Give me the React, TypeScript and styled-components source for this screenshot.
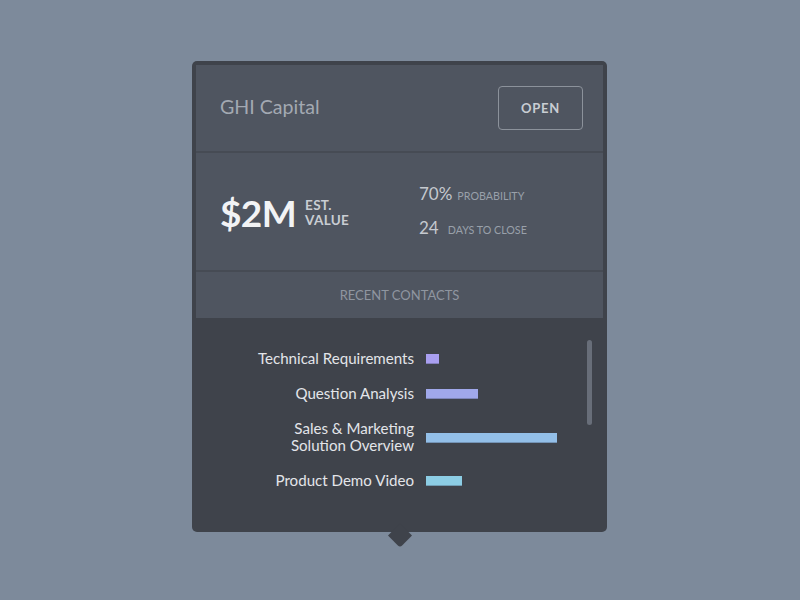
import React from "react";
import styled, { createGlobalStyle } from "styled-components";

const Global = createGlobalStyle`
  html, body {
    margin: 0;
    padding: 0;
    background: #7d8a9b;
    font-family: Lato, "Open Sans", sans-serif;
  }
`;

const Page = styled.div`
  width: 800px;
  height: 600px;
  display: flex;
  justify-content: flex-start;
  align-items: flex-start;
  padding: 61px 0 0 192px;
  box-sizing: border-box;
`;

const Card = styled.div`
  position: relative;
  width: 415px;
  background: #3f434b;
  border-radius: 5px;
  padding: 4px 4px 0;
  box-sizing: border-box;
`;

const Pointer = styled.div`
  position: absolute;
  left: 50%;
  bottom: -12px;
  width: 17px;
  height: 17px;
  background: #3f434b;
  transform: translateX(-50%) rotate(45deg);
  border-bottom-right-radius: 3px;
`;

const Panel = styled.div`
  background: #4f5560;
  display: flex;
  flex-direction: column;
`;

const Header = styled.div`
  height: 86px;
  display: flex;
  align-items: center;
  justify-content: space-between;
  padding: 0 20px 0 24px;
  border-bottom: 2px solid #464b54;
`;

const Title = styled.div`
  font-size: 19.6px;
  color: #a3a9b2;
  margin-bottom: 4px;
`;

const OpenButton = styled.button`
  width: 85px;
  height: 44px;
  margin-bottom: 1px;
  border: 1px solid #8c929b;
  border-radius: 4px;
  background: transparent;
  color: #c9cdd3;
  font-family: Lato, sans-serif;
  font-weight: 700;
  font-size: 13px;
  letter-spacing: 0.8px;
`;

const Stats = styled.div`
  height: 117px;
  display: flex;
  align-items: center;
  padding: 0 0 0 24px;
  border-bottom: 2px solid #464b54;
`;

const Value = styled.div`
  display: flex;
  align-items: center;
  width: 199px;
`;

const Big = styled.div`
  font-size: 37px;
  font-weight: 700;
  color: #f2f3f5;
  letter-spacing: -0.6px;
  margin-top: 2px;
`;

const BigLabel = styled.div`
  font-size: 13.5px;
  font-weight: 700;
  color: #c9cdd3;
  line-height: 15px;
  margin-left: 9px;
  margin-top: 3px;
  letter-spacing: 0.3px;
`;

const Metrics = styled.div`
  display: flex;
  flex-direction: column;
  gap: 13px;
  margin-top: -2px;
`;

const Metric = styled.div`
  display: flex;
  align-items: baseline;
`;

const MetricNum = styled.span<{ $gap: number }>`
  font-size: 17px;
  color: #c5c9cf;
  margin-right: ${(p) => p.$gap}px;
`;

const MetricLabel = styled.span`
  font-size: 10.7px;
  color: #99a0aa;
`;

const SectionTitle = styled.div`
  height: 46px;
  display: flex;
  align-items: center;
  justify-content: center;
  font-size: 13px;
  color: #8f96a0;
`;

const List = styled.div`
  position: relative;
  height: 214px;
  margin: 0 -4px;
  padding-top: 32px;
  box-sizing: border-box;
  display: grid;
  grid-template-columns: 222px 1fr;
  column-gap: 12px;
  row-gap: 18px;
  align-content: start;
`;

const Label = styled.div`
  text-align: right;
  font-size: 15.1px;
  line-height: 17px;
  color: #e3e5e9;
`;

const BarCell = styled.div`
  display: flex;
  align-items: center;
`;

const Bar = styled.div<{ $color: string }>`
  height: 10px;
  background: ${(p) => p.$color};
  box-shadow: inset 0 -1px 0 rgba(60, 70, 90, 0.35);
  margin-top: 1px;
`;

const Scrollbar = styled.div`
  position: absolute;
  right: 15px;
  top: 22px;
  width: 5px;
  height: 85px;
  border-radius: 3px;
  background: #686e79;
`;

const rows = [
  { label: ["Technical Requirements"], w: 13, color: "#a99ff0" },
  { label: ["Question Analysis"], w: 52, color: "#a0a8ea" },
  { label: ["Sales & Marketing", "Solution Overview"], w: 131, color: "#93bfe8" },
  { label: ["Product Demo Video"], w: 36, color: "#8ccde4" },
];

export default function App() {
  return (
    <>
      <Global />
      <Page>
        <Card>
          <Panel>
            <Header>
              <Title>GHI Capital</Title>
              <OpenButton>OPEN</OpenButton>
            </Header>
            <Stats>
              <Value>
                <Big>$2M</Big>
                <BigLabel>
                  EST.
                  <br />
                  VALUE
                </BigLabel>
              </Value>
              <Metrics>
                <Metric>
                  <MetricNum $gap={5}>70%</MetricNum>
                  <MetricLabel>PROBABILITY</MetricLabel>
                </Metric>
                <Metric>
                  <MetricNum $gap={9}>24</MetricNum>
                  <MetricLabel>DAYS TO CLOSE</MetricLabel>
                </Metric>
              </Metrics>
            </Stats>
            <SectionTitle>RECENT CONTACTS</SectionTitle>
          </Panel>
          <List>
            {rows.map((r) => (
              <React.Fragment key={r.label.join(" ")}>
                <Label>
                  {r.label.map((l, i) => (
                    <div key={i}>{l}</div>
                  ))}
                </Label>
                <BarCell>
                  <Bar $color={r.color} style={{ width: r.w }} />
                </BarCell>
              </React.Fragment>
            ))}
            <Scrollbar />
          </List>
          <Pointer />
        </Card>
      </Page>
    </>
  );
}
